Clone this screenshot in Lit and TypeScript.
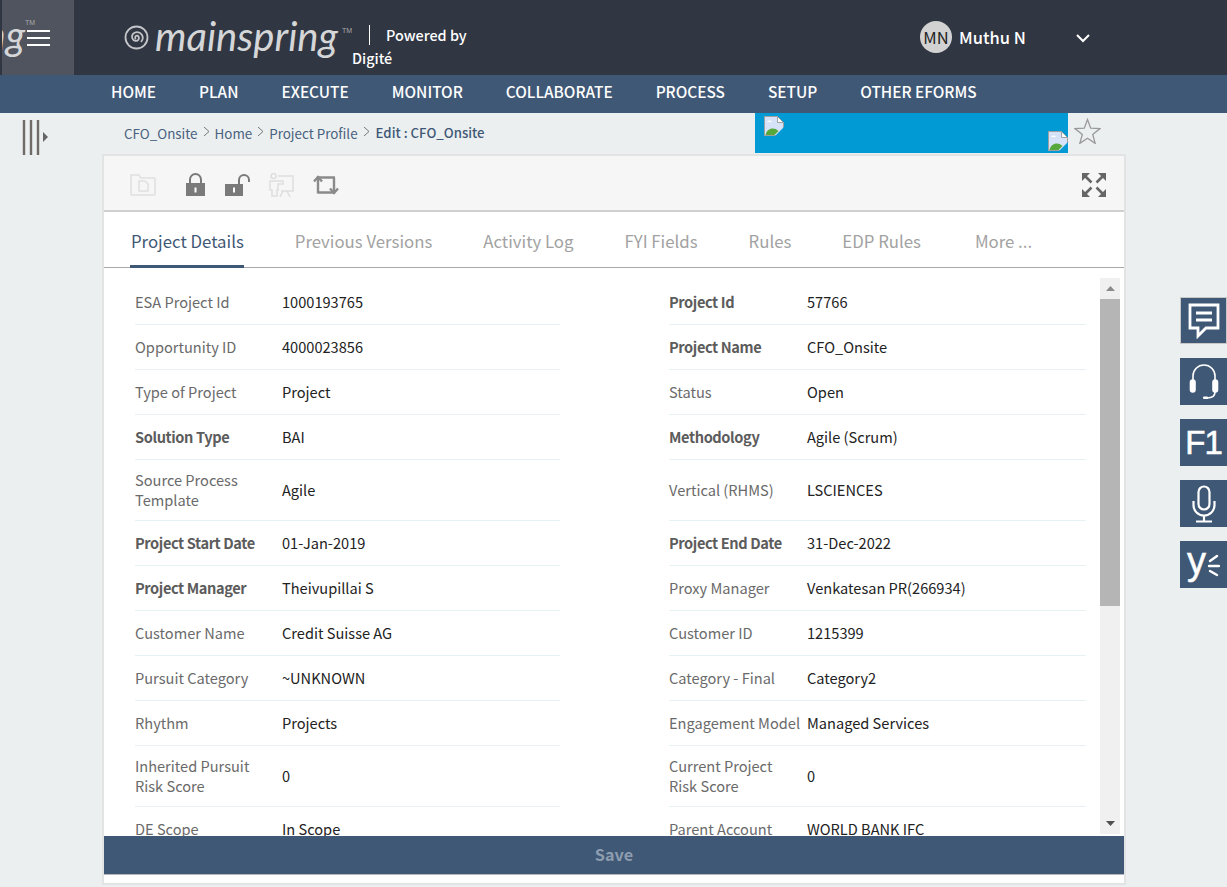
import { LitElement, html, css, svg } from 'lit';
import { customElement } from 'lit/decorators.js';

type Field = { label: string; value: string; bold?: boolean };

// left and right column of the form, row by row
const ROWS: [Field, Field][] = [
  [{ label: 'ESA Project Id', value: '1000193765' }, { label: 'Project Id', value: '57766', bold: true }],
  [{ label: 'Opportunity ID', value: '4000023856' }, { label: 'Project Name', value: 'CFO_Onsite', bold: true }],
  [{ label: 'Type of Project', value: 'Project' }, { label: 'Status', value: 'Open' }],
  [{ label: 'Solution Type', value: 'BAI', bold: true }, { label: 'Methodology', value: 'Agile (Scrum)', bold: true }],
  [{ label: 'Source Process Template', value: 'Agile' }, { label: 'Vertical (RHMS)', value: 'LSCIENCES' }],
  [{ label: 'Project Start Date', value: '01-Jan-2019', bold: true }, { label: 'Project End Date', value: '31-Dec-2022', bold: true }],
  [{ label: 'Project Manager', value: 'Theivupillai S', bold: true }, { label: 'Proxy Manager', value: 'Venkatesan PR(266934)' }],
  [{ label: 'Customer Name', value: 'Credit Suisse AG' }, { label: 'Customer ID', value: '1215399' }],
  [{ label: 'Pursuit Category', value: '~UNKNOWN' }, { label: 'Category - Final', value: 'Category2' }],
  [{ label: 'Rhythm', value: 'Projects' }, { label: 'Engagement Model', value: 'Managed Services' }],
  [{ label: 'Inherited Pursuit Risk Score', value: '0' }, { label: 'Current Project Risk Score', value: '0' }],
  [{ label: 'DE Scope', value: 'In Scope' }, { label: 'Parent Account', value: 'WORLD BANK IFC' }],
];

const NAV = ['HOME', 'PLAN', 'EXECUTE', 'MONITOR', 'COLLABORATE', 'PROCESS', 'SETUP', 'OTHER EFORMS'];
const TABS = ['Project Details', 'Previous Versions', 'Activity Log', 'FYI Fields', 'Rules', 'EDP Rules', 'More ...'];

const brokenImage = (cls: string) => svg`<svg class="${cls}" width="20" height="20" viewBox="0 0 20 20">
  <path d="M.5.5h13l6 6v13H.5z" fill="#d6e2f8" stroke="#a0a0a0"/>
  <path d="M13.500.5v6h6z" fill="#fff" stroke="#a0a0a0"/>
  <path d="M3 6c1-2 4-2 5 0H3z" fill="#fff"/>
  <path d="M1.500 19c1-6 8-9 13-4l-4 4z" fill="#56a83c"/>
  <path d="M11 20l9-9v9z" fill="#029ad4"/>
</svg>`;

const lock = (open: boolean) => svg`<svg width="${open ? 26 : 19}" height="23" viewBox="0 0 ${open ? 26 : 19} 23">
  ${open
    ? svg`<path d="M14 11V7a5 5 0 0 1 10 0v2" fill="none" stroke="#7a7a7a" stroke-width="2"/>
          <path d="M0 11h18v12H0z" fill="#7a7a7a"/><path d="M9 14.500v5" stroke="#fff" stroke-width="2"/>`
    : svg`<path d="M4 11V6.500a5.500 5.500 0 0 1 11 0V11" fill="none" stroke="#7a7a7a" stroke-width="2"/>
          <path d="M0 10h19v13H0z" fill="#7a7a7a"/><path d="M9.500 14.500v5" stroke="#fff" stroke-width="2"/>`}
</svg>`;

@customElement('app-root')
export class AppRoot extends LitElement {
  static styles = css`
    :host {
      display: block;
      height: 100vh;
      overflow: hidden;
      position: relative;
      background: #ebeff0;
      font-family: 'Noto Sans CJK SC', 'Noto Sans', sans-serif;
      font-size: 14.600px;
      color: #222;
    }
    .top {
      display: flex;
      align-items: center;
      height: 75px;
      background: #303642;
      color: #fff;
    }
    .burger {
      flex: none;
      box-sizing: border-box;
      width: 72px;
      height: 75px;
      margin-left: 2px;
      background: #50545e;
      display: flex;
      align-items: center;
      justify-content: flex-end;
      padding-right: 24px;
      position: relative;
      overflow: hidden;
    }
    .clip {
      position: absolute;
      right: 49px;
      top: 7px;
      white-space: nowrap;
      font: italic 400 40px/56px Lato, sans-serif;
      color: #d5d6d8;
    }
    .tm {
      position: absolute;
      font: 400 7px/8px 'Liberation Sans', sans-serif;
      color: #aaa;
    }
    .burger .tm { left: 23px; top: 19px; }
    .bars {
      position: relative;
      display: flex;
      flex-direction: column;
      gap: 5px;
    }
    .bars i {
      display: block;
      width: 23px;
      height: 2px;
      background: #fff;
    }
    .logo {
      position: relative;
      display: flex;
      align-items: center;
      gap: 6px;
      margin-left: 50px;
      color: #d5d6d8;
      font: italic 400 40px/56px Lato, sans-serif;
      width: 221px;
      flex: none;
    }
    .logo span { margin-top: -3px; }
    .logo .tm { left: 218px; top: 19px; }
    .powered {
      flex: none;
      width: 140px;
      margin-left: 3px;
      position: relative;
      height: 75px;
      font-size: 14.400px;
      font-weight: 500;
      line-height: 22px;
    }
    .powered .rule {
      position: absolute;
      left: 21px;
      top: 25px;
      width: 1px;
      height: 20px;
      background: #fff;
    }
    .powered .by { position: absolute; left: 38px; top: 24px; }
    .powered .dg { position: absolute; left: 4px; top: 47px; }
    .user {
      margin-left: 432px;
      margin-bottom: 1px;
      display: flex;
      align-items: center;
      gap: 7px;
      font-size: 16.500px;
      font-weight: 500;
    }
    .avatar {
      width: 32px;
      height: 32px;
      border-radius: 50%;
      background: #d2d2d2;
      color: #222;
      font-size: 16.500px;
      font-weight: 400;
      line-height: 32px;
      text-align: center;
    }
    .chev { margin-left: 49px; display: block; }
    nav {
      box-sizing: border-box;
      height: 38px;
      background: #3f5876;
      display: flex;
      align-items: center;
      gap: 43px;
      padding: 0 0 6px 111px;
      color: #fff;
      font-size: 15.400px;
      font-weight: 500;
      line-height: 24px;
    }
    .sub {
      display: flex;
      height: 40px;
      position: relative;
    }
    .side { margin: 7px 0 0 22px; flex: none; display: block; }
    .crumbs {
      flex: none;
      box-sizing: border-box;
      width: 705px;
      padding: 7px 0 0 74px;
      display: flex;
      gap: 5px;
      align-items: center;
      height: 33px;
      font-size: 13.400px;
      line-height: 20px;
      color: #49617e;
      white-space: nowrap;
    }
    .crumbs b { font-weight: 500; color: #3f5876; margin-left: 1px; font-size: 13.200px; }
    .crumbs svg { margin-top: -3px; }
    .banner {
      position: relative;
      flex: none;
      width: 313px;
      height: 40px;
      background: #029ad4;
      overflow: hidden;
    }
    .broken { position: absolute; left: 9px; top: 3px; }
    .broken-end { position: absolute; left: 293px; top: 18px; }
    .star { margin: 5px 0 0 6px; flex: none; display: block; }
    .card {
      box-sizing: border-box;
      margin: 1px 0 0 102px;
      width: 1024px;
      height: 731px;
      border: 2px solid #e2e3e3;
      background: #fff;
      display: flex;
      flex-direction: column;
    }
    .tools {
      flex: none;
      box-sizing: border-box;
      height: 56px;
      background: #f6f6f6;
      border-bottom: 2px solid #d0d0d0;
      display: flex;
      align-items: center;
      padding: 3px 18px 0 26px;
    }
    .tools svg { display: block; flex: none; }
    .tabs {
      flex: none;
      box-sizing: border-box;
      height: 56px;
      padding-left: 26px;
      display: flex;
      gap: 50px;
      border-bottom: 1px solid #a9a9a9;
      font-size: 16.800px;
      line-height: 26px;
      color: #a2a2a2;
    }
    .tabs div {
      padding: 16px 0 0 1px;
      margin-bottom: -1px;
      box-sizing: border-box;
      height: 56px;
    }
    .tabs div:last-child { margin-left: 3px; }
    .tabs .on {
      color: #3f5876;
      border-bottom: 3px solid #3f5876;
    }
    .body {
      flex: 1;
      min-height: 0;
      display: flex;
    }
    .form {
      flex: 1;
      min-width: 0;
      overflow: hidden;
      padding: 12px 0 0 31px;
    }
    .row {
      display: grid;
      grid-template-columns: 425px 417px;
      column-gap: 109px;
    }
    .field {
      display: grid;
      align-items: center;
      border-bottom: 1px solid #e6f1f3;
      min-height: 44px;
      line-height: 20px;
    }
    .left { grid-template-columns: 147px 1fr; }
    .right { grid-template-columns: 138px 1fr; }
    .label { color: #6a6a6a; padding: 10px 6px 10px 0; }
    .label.bold { font-weight: 700; color: #5c5c5c; letter-spacing: -0.400px; }
    .scroll {
      flex: none;
      box-sizing: border-box;
      width: 20px;
      margin: 10px 4px 2px 0;
      background: #f0f0f0;
      display: flex;
      flex-direction: column;
      align-items: center;
    }
    .scroll .arrow { flex: none; height: 21px; display: flex; align-items: center; }
    .scroll .thumb { flex: none; width: 100%; height: 307px; background: #b5b5b5; }
    .scroll .rest { flex: 1; }
    .save {
      flex: none;
      box-sizing: border-box;
      height: 38px;
      margin-bottom: 9px;
      padding-bottom: 2px;
      background: #3f5876;
      box-shadow: 0 1px 0 #b4b8bd;
      color: #8d9cae;
      font-size: 16.200px;
      font-weight: 700;
      line-height: 36px;
      text-align: center;
    }
    .dock {
      position: absolute;
      right: 0;
      top: 297px;
      display: flex;
      flex-direction: column;
      gap: 14px;
    }
    .dock div {
      box-sizing: border-box;
      width: 47px;
      height: 47px;
      background: #3f5876;
      display: flex;
      align-items: center;
      justify-content: center;
      color: #fff;
    }
    .dock div.first { border: 1px solid #c8c8c8; }
    .dock .f1 { font: 400 33px/47px 'Liberation Sans', sans-serif; -webkit-text-stroke: 0.600px #fff; letter-spacing: -1px; }
    .dock svg { display: block; }
    .yam { display: flex; align-items: center; }
    .yam span { font: 400 38px/40px 'Liberation Sans', sans-serif; -webkit-text-stroke: 0.500px #fff; margin: -8px -1px 0 0; }
  `;

  private field(f: Field, side: string) {
    return html`<div class="field ${side}">
      <span class="label ${f.bold ? 'bold' : ''}">${f.label}</span>
      <span>${f.value}</span>
    </div>`;
  }

  private crumbSep() {
    return html`<svg width="7" height="11" viewBox="0 0 7 11"><path d="M1 1l5 4.500-5 4.500" fill="none" stroke="#777"/></svg>`;
  }

  render() {
    return html`
      <div class="top">
        <div class="burger">
          <span class="clip">mainspring</span><span class="tm">TM</span>
          <div class="bars"><i></i><i></i><i></i></div>
        </div>
        <div class="logo">
          <svg width="25" height="25" viewBox="0 0 25 25" fill="none" stroke="#c4c5c8" stroke-width="1.800">
            <circle cx="12.500" cy="12.500" r="11"/>
            <path d="M12 14a1.800 1.800 0 1 1 2.500-2.500c1.500 2.200-.5 4.800-3.200 4.300-3-.6-4.200-4-2.600-6.500 2-3 6.800-2.800 9 .3 1.600 2.400 1.200 5.400-.7 7.400"/>
          </svg>
          <span>mainspring</span><span class="tm">TM</span>
        </div>
        <div class="powered">
          <i class="rule"></i>
          <span class="by">Powered by</span>
          <span class="dg">Digité</span>
        </div>
        <div class="user">
          <span class="avatar">MN</span>
          <span>Muthu N</span>
        </div>
        <svg class="chev" width="16" height="10" viewBox="0 0 16 10"><path d="M2 2l6 6 6-6" fill="none" stroke="#fff" stroke-width="2"/></svg>
      </div>
      <nav>${NAV.map((n) => html`<span>${n}</span>`)}</nav>
      <div class="sub">
        <svg class="side" width="28" height="35" viewBox="0 0 28 35">
          <path d="M2 0v35M9 0v35M16 0v35" stroke="#6f6a66" stroke-width="2.400"/>
          <path d="M21 12l5 5-5 5z" fill="#666"/>
        </svg>
        <div class="crumbs">
          <span>CFO_Onsite</span>${this.crumbSep()}
          <span>Home</span>${this.crumbSep()}
          <span>Project Profile</span>${this.crumbSep()}
          <b>Edit : CFO_Onsite</b>
        </div>
        <div class="banner">
          ${brokenImage('broken')}
          ${brokenImage('broken-end')}
        </div>
        <svg class="star" width="27" height="26" viewBox="0 0 27 26"><path d="M13.500 1.500l3.200 8.700 9.300.4-7.300 5.800 2.500 9-7.700-5.200-7.700 5.200 2.500-9L1 10.600l9.300-.4z" fill="none" stroke="#9a9a9a" stroke-width="1.300"/></svg>
      </div>
      <div class="card">
        <div class="tools">
          <svg width="26" height="23" viewBox="0 0 26 23" fill="none" stroke="#e0e0e0" stroke-width="1.600">
            <path d="M1 5V2h8l2 3h13a1 1 0 0 1 1 1v15a1 1 0 0 1-1 1H2a1 1 0 0 1-1-1z"/>
            <path d="M9 8h6l3 3v7H9z"/>
          </svg>
          <span style="width:30px"></span>
          ${lock(false)}
          <span style="width:20px"></span>
          ${lock(true)}
          <span style="width:18px"></span>
          <svg width="25" height="24" viewBox="0 0 25 24" fill="none" stroke="#dedede" stroke-width="1.500">
            <circle cx="4.500" cy="3" r="2.500"/>
            <path d="M1 8h13v3H9v6H8v6H3v-6H1zM9 3h15v15H12M14 18l-3 6M18 18l3 6"/>
          </svg>
          <span style="width:19px"></span>
          <svg width="26" height="22" viewBox="0 0 26 22" fill="none" stroke="#8a8a8a" stroke-width="2.400">
            <path d="M5 19.500V3.500h17M21 3.500v15H5"/>
            <path d="M1 7.500l4-4.500 4 4.500M17 14.500l4 4.500 4-4.500"/>
          </svg>
          <span style="flex:1"></span>
          <svg width="24" height="24" viewBox="0 0 24 24">
            <path d="M0 0h8L0 8zM24 0v8l-8-8zM0 24v-8l8 8zM24 24h-8l8-8z" fill="#666"/>
            <path d="M3 3l6.500 6.500M21 3l-6.500 6.500M3 21l6.500-6.500M21 21l-6.500-6.500" stroke="#666" stroke-width="2.600"/>
          </svg>
        </div>
        <div class="tabs">
          ${TABS.map((t, i) => html`<div class="${i === 0 ? 'on' : ''}">${t}</div>`)}
        </div>
        <div class="body">
          <div class="form">
            ${ROWS.map(([l, r]) => html`<div class="row">${this.field(l, 'left')}${this.field(r, 'right')}</div>`)}
          </div>
          <div class="scroll">
            <div class="arrow"><svg width="9" height="5" viewBox="0 0 9 5"><path d="M0 5h9L4.500 0z" fill="#8a8a8a"/></svg></div>
            <div class="thumb"></div>
            <div class="rest"></div>
            <div class="arrow"><svg width="9" height="5" viewBox="0 0 9 5"><path d="M0 0h9L4.500 5z" fill="#505050"/></svg></div>
          </div>
        </div>
        <div class="save">Save</div>
      </div>
      <div class="dock">
        <div class="first">
          <svg width="32" height="36" viewBox="0 0 32 36" fill="none" stroke="#fff" stroke-width="2.800">
            <path d="M2 2h28v23H18l-8 8v-8H2z"/>
            <path d="M8 10h16M8 17h16"/>
          </svg>
        </div>
        <div>
          <svg width="30" height="38" viewBox="0 0 30 38" fill="none" stroke="#fff" stroke-width="1.600">
            <path d="M4 20v-7a11 11 0 0 1 22 0v7"/>
            <rect x="1.500" y="17" width="4.500" height="12" rx="2.200" fill="#fff"/>
            <rect x="24" y="17" width="4.500" height="12" rx="2.200" fill="#fff"/>
            <path d="M26 29c0 4-3 6-8 6"/><rect x="14" y="33.500" width="5" height="2.500" rx="1" fill="#fff" stroke="none"/>
          </svg>
        </div>
        <div class="f1">F1</div>
        <div>
          <svg width="26" height="38" viewBox="0 0 26 38" fill="none" stroke="#fff" stroke-width="2.200">
            <rect x="7.500" y="1.500" width="11" height="23" rx="5.500"/>
            <path d="M2.500 16v4a10.500 10.500 0 0 0 21 0v-4M13 31v5M5 36.500h16"/>
          </svg>
        </div>
        <div>
          <span class="yam">
            <span>y</span>
            <svg width="15" height="24" viewBox="0 0 15 24" fill="none" stroke="#fff" stroke-width="2.400" stroke-linecap="round">
              <path d="M12 3L5 8M4 13h10M5 18l7 4"/>
            </svg>
          </span>
        </div>
      </div>
    `;
  }
}
